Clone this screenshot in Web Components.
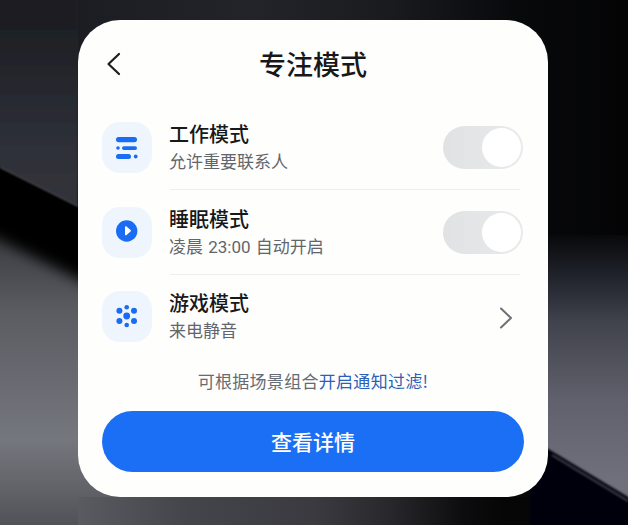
<!DOCTYPE html>
<html lang="zh">
<head>
<meta charset="utf-8">
<title>专注模式</title>
<style>
  html, body { margin: 0; height: 100%; }
  body { font-family: "Noto Sans CJK SC", "Noto Sans", sans-serif; }
</style>
</head>
<body>
<focus-screen>
  <focus-card title="专注模式">
    <mode-row name="工作模式" note="允许重要联系人" icon="list" action="toggle"></mode-row>
    <mode-row name="睡眠模式" note="凌晨 23:00 自动开启" icon="play" action="toggle"></mode-row>
    <mode-row name="游戏模式" note="来电静音" icon="dots" action="more" last></mode-row>
    <p slot="hint">可根据场景组合<a>开启通知过滤!</a></p>
    <big-button slot="action">查看详情</big-button>
  </focus-card>
</focus-screen>

<script>
// Blurred wallpaper behind the card
class FocusScreen extends HTMLElement {
  constructor() {
    super();
    this.attachShadow({ mode: "open" });
  }

  connectedCallback() {
    this.shadowRoot.innerHTML = `
      <style>
        :host {
          display: flex;
          position: relative;
          width: 628px;
          height: 525px;
          padding: 20px 80px 28px 78px;
          box-sizing: border-box;
          overflow: hidden;
          background: #08090b;
        }
        svg { position: absolute; inset: 0; }
        ::slotted(*) { position: relative; }
      </style>
      <svg width="628" height="525" viewBox="0 0 628 525" aria-hidden="true">
        <defs>
          <linearGradient id="top" gradientUnits="userSpaceOnUse" x1="0" y1="0" x2="628" y2="0">
            <stop offset="0.12" stop-color="#1c1d22"/>
            <stop offset="0.4" stop-color="#232429"/>
            <stop offset="0.62" stop-color="#1a1b1f"/>
            <stop offset="0.82" stop-color="#08090b"/>
            <stop offset="1" stop-color="#040405"/>
          </linearGradient>
          <linearGradient id="leftTop" gradientUnits="userSpaceOnUse" x1="0" y1="0" x2="0" y2="210">
            <stop offset="0.05" stop-color="#1c1d22"/>
            <stop offset="0.7" stop-color="#2e3038"/>
            <stop offset="1" stop-color="#32343b"/>
          </linearGradient>
          <linearGradient id="low" gradientUnits="userSpaceOnUse" x1="0" y1="220" x2="0" y2="525">
            <stop offset="0" stop-color="#34353a"/>
            <stop offset="0.3" stop-color="#5a5c62"/>
            <stop offset="0.72" stop-color="#75777e"/>
            <stop offset="0.85" stop-color="#65676d"/>
            <stop offset="1" stop-color="#505258"/>
          </linearGradient>
          <linearGradient id="right" gradientUnits="userSpaceOnUse" x1="0" y1="235" x2="0" y2="480">
            <stop offset="0" stop-color="#08090b"/>
            <stop offset="0.18" stop-color="#22252d"/>
            <stop offset="0.36" stop-color="#41434d"/>
            <stop offset="0.68" stop-color="#60616c"/>
            <stop offset="1" stop-color="#6f707c"/>
          </linearGradient>
          <linearGradient id="foot" gradientUnits="userSpaceOnUse" x1="0" y1="0" x2="628" y2="0">
            <stop offset="0.125" stop-color="#595b61"/>
            <stop offset="0.3" stop-color="#44454a"/>
            <stop offset="0.5" stop-color="#3a3a40"/>
            <stop offset="0.62" stop-color="#28282c"/>
            <stop offset="0.74" stop-color="#0c0c0e"/>
            <stop offset="0.8" stop-color="#060607"/>
          </linearGradient>
          <filter id="soft" x="-20%" y="-20%" width="140%" height="140%"><feGaussianBlur stdDeviation="7"/></filter>
          <filter id="softer" x="-20%" y="-20%" width="140%" height="140%"><feGaussianBlur stdDeviation="1.2"/></filter>
        </defs>
        <rect width="628" height="240" fill="url(#top)"/>
        <rect y="220" width="140" height="305" fill="url(#low)"/>
        <polygon points="-20,140 140,220 140,310 -20,230" fill="#040405" filter="url(#soft)"/>
        <polygon points="-20,-20 78,-20 78,206 -20,157" fill="url(#leftTop)" filter="url(#softer)"/>
        <line x1="0" y1="167" x2="78" y2="206" stroke="#4a4b52" stroke-width="1.5" filter="url(#softer)"/>
        <rect x="78" y="497" width="550" height="28" fill="url(#foot)"/>
        <polygon points="530,235 628,235 628,500 530,440" fill="url(#right)"/>
        <polygon points="530,438 640,504 640,560 530,560" fill="#060607" filter="url(#softer)"/>
        <line x1="552" y1="455" x2="628" y2="501" stroke="#4a4b55" stroke-width="1.5" filter="url(#softer)"/>
      </svg>
      <slot></slot>
    `;
  }
}

// White rounded panel with header, rows, hint and button
class FocusCard extends HTMLElement {
  constructor() {
    super();
    this.attachShadow({ mode: "open" });
  }

  connectedCallback() {
    this.shadowRoot.innerHTML = `
      <style>
        :host {
          display: flex;
          flex-direction: column;
          width: 470px;
          height: 477px;
          padding: 0 24px;
          box-sizing: border-box;
          background: #fefefd;
          border-radius: 42px;
        }
        header {
          display: grid;
          grid-template-columns: 40px 1fr 40px;
          align-items: center;
          height: 86px;
          flex: none;
        }
        h1 {
          margin: 0;
          font-size: 27px;
          font-weight: 500;
          line-height: 1;
          text-align: center;
          color: #17181a;
        }
        svg { display: block; margin-left: 3px; position: relative; top: 1px; }
        .rows { display: flex; flex-direction: column; margin-top: 16px; }
        ::slotted(p) {
          margin: 27px 0 0;
          font-size: 17px;
          letter-spacing: 0.3px;
          line-height: 24px;
          text-align: center;
          color: #666a72;
        }
        ::slotted(big-button) { margin-top: 18px; }
      </style>
      <header>
        <svg width="16" height="24" viewBox="0 0 16 24" aria-hidden="true">
          <path d="M14 2 3.5 12 14 22" fill="none" stroke="#1c1d20" stroke-width="2.2" stroke-linecap="round" stroke-linejoin="round"/>
        </svg>
        <h1>${this.getAttribute("title")}</h1>
      </header>
      <div class="rows"><slot></slot></div>
      <slot name="hint"></slot>
      <slot name="action"></slot>
    `;
    const hintLink = this.querySelector("p a");
    if (hintLink) hintLink.style.color = "#2b5fb8";
  }
}

const MODE_ICONS = {
  list: `<g fill="#1a6cf5">
      <rect x="14" y="15" width="21" height="5.2" rx="2.6"/>
      <circle cx="16" cy="26" r="1.8"/>
      <rect x="20" y="24.2" width="15" height="3.8" rx="1.9"/>
      <rect x="14" y="32" width="15" height="5" rx="2.5"/>
      <circle cx="33.7" cy="34.5" r="1.9"/>
    </g>`,
  play: `<circle cx="24.7" cy="24" r="10.7" fill="#1a6cf5"/>
    <path d="M23 20c0-.7.7-1.1 1.3-.7l4.2 3.6c.5.4.5 1.1 0 1.5l-4.2 3.9c-.6.4-1.3 0-1.3-.7z" fill="#fff"/>`,
  dots: `<g fill="#1a6cf5">
      <circle cx="24.7" cy="25" r="3.4"/>
      <circle cx="24.7" cy="16.3" r="2.3"/>
      <circle cx="24.7" cy="34" r="2.3"/>
      <circle cx="17.4" cy="19.8" r="3"/>
      <circle cx="32" cy="19.8" r="3"/>
      <circle cx="17.4" cy="30" r="3"/>
      <circle cx="32" cy="30" r="3"/>
    </g>`,
};

// One mode: icon tile, two lines of text, toggle or chevron
class ModeRow extends HTMLElement {
  constructor() {
    super();
    this.attachShadow({ mode: "open" });
  }

  connectedCallback() {
    const action =
      this.getAttribute("action") === "toggle"
        ? `<mode-toggle></mode-toggle>`
        : `<svg class="chev" width="16" height="24" viewBox="0 0 16 24" aria-hidden="true">
             <path d="M3 3.5 13 13 3 22.5" fill="none" stroke="#6d7075" stroke-width="2" stroke-linecap="round" stroke-linejoin="round"/>
           </svg>`;
    this.shadowRoot.innerHTML = `
      <style>
        :host { display: block; }
        .row {
          display: flex;
          align-items: center;
          height: 51px;
        }
        .tile {
          width: 50px;
          height: 51px;
          flex: none;
          border-radius: 18px;
          background: #eff5fc;
        }
        .text { flex: 1; margin: 2px 0 0 17px; min-width: 0; }
        .name {
          font-size: 20px;
          line-height: 28px;
          font-weight: 500;
          color: #17181a;
        }
        .note {
          font-family: Roboto, "Noto Sans CJK SC", sans-serif;
          font-size: 17px;
          line-height: 29px;
          word-spacing: 1px;
          color: #62656b;
        }
        .chev { margin-right: 10px; }
        hr {
          margin: 16px 4px 16.5px 68px;
          border: 0;
          height: 1px;
          background: #eeeeee;
        }
      </style>
      <div class="row">
        <svg class="tile" viewBox="0 0 50 51" aria-hidden="true">${MODE_ICONS[this.getAttribute("icon")]}</svg>
        <div class="text">
          <div class="name">${this.getAttribute("name")}</div>
          <div class="note">${this.getAttribute("note")}</div>
        </div>
        ${action}
      </div>
      ${this.hasAttribute("last") ? "" : "<hr>"}
    `;
  }
}

class ModeToggle extends HTMLElement {
  constructor() {
    super();
    this.attachShadow({ mode: "open" });
  }

  connectedCallback() {
    this.shadowRoot.innerHTML = `
      <style>
        :host {
          display: flex;
          justify-content: flex-end;
          align-items: center;
          width: 80px;
          height: 43px;
          margin-right: 1px;
          padding-right: 2px;
          box-sizing: border-box;
          flex: none;
          border-radius: 22px;
          background: linear-gradient(90deg, #e1e2e4, #e9eaeb);
        }
        span {
          width: 39px;
          height: 39px;
          border-radius: 50%;
          background: #fff;
        }
      </style>
      <span></span>
    `;
  }
}

class BigButton extends HTMLElement {
  constructor() {
    super();
    this.attachShadow({ mode: "open" });
  }

  connectedCallback() {
    this.shadowRoot.innerHTML = `
      <style>
        :host {
          display: flex;
          align-items: center;
          justify-content: center;
          height: 61px;
          padding-bottom: 2px;
          box-sizing: border-box;
          border-radius: 31px;
          background: #1b6ff4;
          color: #fff;
          font-size: 21px;
          font-weight: 500;
        }
      </style>
      <slot></slot>
    `;
  }
}

customElements.define("focus-screen", FocusScreen);
customElements.define("focus-card", FocusCard);
customElements.define("mode-row", ModeRow);
customElements.define("mode-toggle", ModeToggle);
customElements.define("big-button", BigButton);
</script>
</body>
</html>
